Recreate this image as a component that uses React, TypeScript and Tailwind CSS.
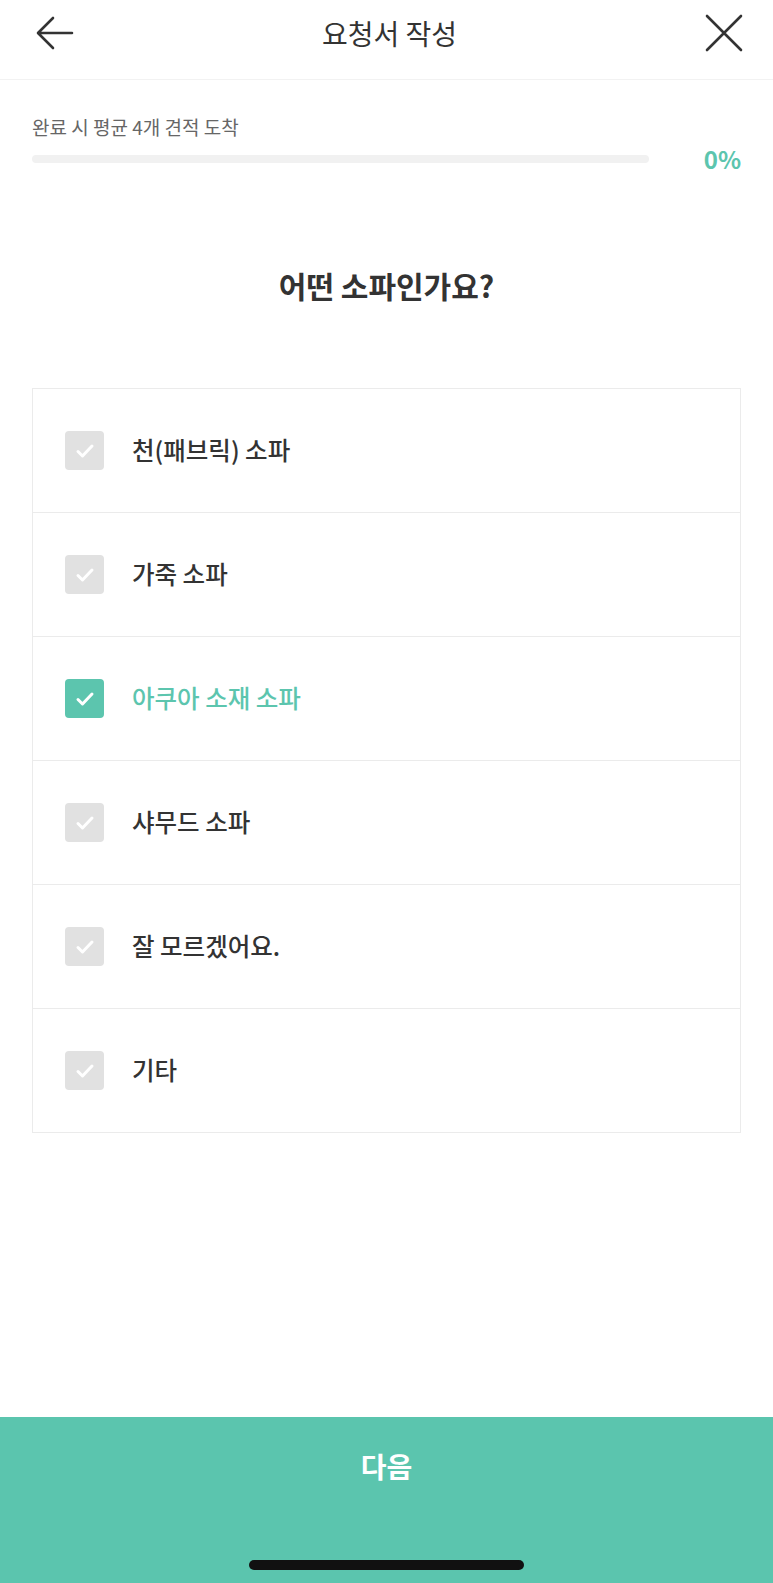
import { useState } from 'react'

const options = ['천(패브릭) 소파', '가죽 소파', '아쿠아 소재 소파', '샤무드 소파', '잘 모르겠어요.', '기타']

function CheckBox({ checked }: { checked: boolean }) {
  return (
    <div
      className={`flex h-[39px] w-[39px] shrink-0 items-center justify-center rounded-[4px] ${
        checked ? 'bg-[#5cc5ae]' : 'bg-[#e1e1e1]'
      }`}
    >
      <svg width="24" height="24" viewBox="0 0 24 24" fill="none">
        <path d="M5 12.5l4.5 4.5 9.5-10" stroke="white" strokeWidth="3" strokeLinecap="round" strokeLinejoin="round" />
      </svg>
    </div>
  )
}

export default function App() {
  const [selected, setSelected] = useState(2)

  return (
    <div
      className="flex min-h-screen w-full flex-col bg-white text-[#333]"
      style={{ fontFamily: '"Noto Sans CJK KR", "Noto Sans", sans-serif' }}
    >
      <header className="flex h-[80px] items-center justify-between border-b border-[#f2f2f2] pb-[14px] pl-[36px] pr-[30px]">
        <svg width="38" height="34" viewBox="0 0 38 34" fill="none">
          <path d="M36 17H3M17 2L2 17l15 15" stroke="#333" strokeWidth="2.6" strokeLinecap="round" strokeLinejoin="round" />
        </svg>
        <h1 className="text-[28px] leading-none font-normal">요청서 작성</h1>
        <svg width="38" height="38" viewBox="0 0 38 38" fill="none">
          <path d="M2 2l34 34M36 2L2 36" stroke="#333" strokeWidth="2.6" strokeLinecap="round" />
        </svg>
      </header>

      <div className="px-[32px] pt-[35px]">
        <p className="text-[19px] leading-[24px] text-[#666]">완료 시 평균 4개 견적 도착</p>
        <div className="mt-[6px] flex items-center justify-between">
          <div className="h-[8px] w-[617px] rounded-full bg-[#f1f1f1]" />
          <span className="text-[24px] leading-[28px] font-semibold text-[#5cc5ae]">0%</span>
        </div>
      </div>

      <h2 className="mt-[93px] text-center text-[30px] leading-[38px] font-bold text-[#333]">어떤 소파인가요?</h2>

      <ul className="mx-[32px] mt-[84px] border border-[#ebebeb]">
        {options.map((o, i) => (
          <li
            key={o}
            onClick={() => setSelected(i)}
            className={`flex cursor-pointer items-center gap-[28px] px-[32px] ${
              i > 0 ? 'h-[124px] border-t border-[#ebebeb]' : 'h-[123px]'
            }`}
          >
            <CheckBox checked={selected === i} />
            <span className={`text-[24.5px] font-medium ${selected === i ? 'text-[#5cc5ae]' : 'text-[#333]'}`}>{o}</span>
          </li>
        ))}
      </ul>

      <div className="flex-1" />

      <button className="flex h-[166px] w-full flex-col items-center bg-[#5bc5ae] pt-[31px]">
        <span className="text-[28px] leading-[36px] font-bold text-white">다음</span>
        <span className="mt-[76px] h-[10px] w-[275px] rounded-full bg-[#111]" />
      </button>
    </div>
  )
}
